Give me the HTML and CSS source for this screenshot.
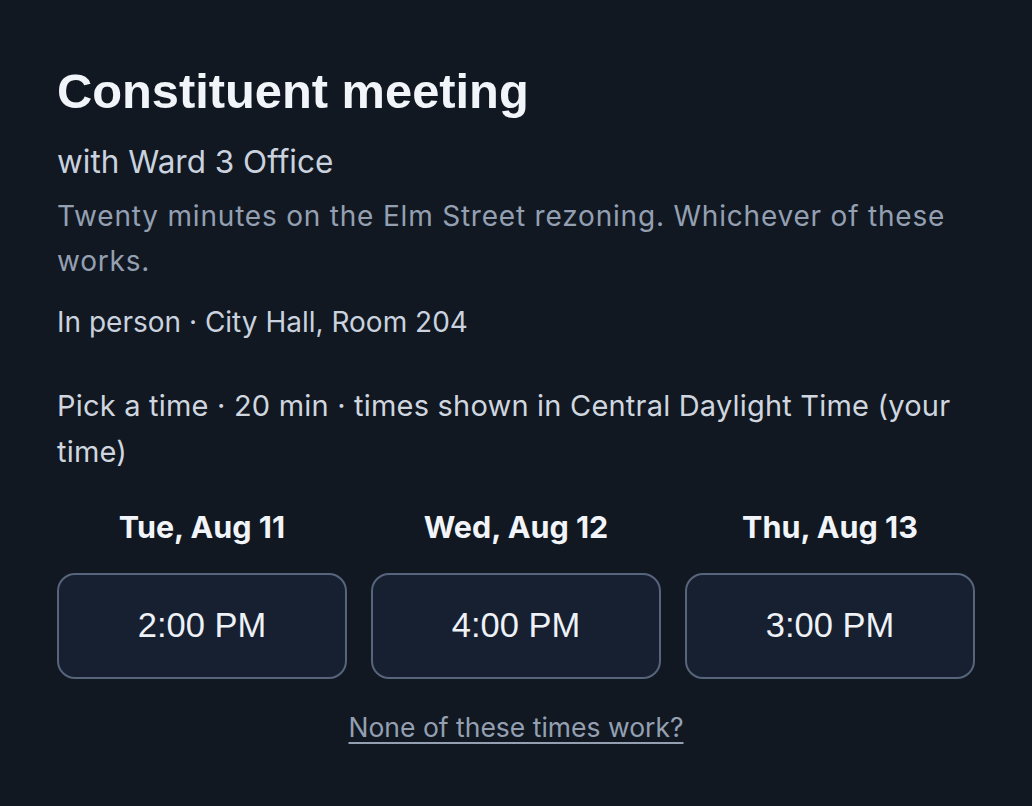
FILE: index.html
```html
<!DOCTYPE html>
<html lang="en">
<head>
<meta charset="utf-8">
<title>Constituent meeting</title>
<link rel="stylesheet" href="styles.css">
</head>
<body>
<main class="card">
  <h1 class="title">Constituent meeting</h1>
  <p class="host">with Ward 3 Office</p>
  <p class="desc">Twenty minutes on the Elm Street rezoning. Whichever of these works.</p>
  <p class="place">In person · City Hall, Room 204</p>
  <p class="pick">Pick a time · 20 min · times shown in Central Daylight Time (your time)</p>
  <div class="days">
    <div class="day">
      <div class="day-label">Tue, Aug 11</div>
      <button class="slot">2:00 PM</button>
    </div>
    <div class="day">
      <div class="day-label">Wed, Aug 12</div>
      <button class="slot">4:00 PM</button>
    </div>
    <div class="day">
      <div class="day-label">Thu, Aug 13</div>
      <button class="slot">3:00 PM</button>
    </div>
  </div>
  <div class="none-row"><a class="none" href="#">None of these times work?</a></div>
</main>
</body>
</html>
```

FILE: styles.css
```css
html, body {
  margin: 0;
  padding: 0;
  background: #111822;
}
body {
  font-family: "Inter", "Liberation Sans", sans-serif;
  width: 1032px;
  height: 806px;
  overflow: hidden;
}
.card {
  padding: 62px 57px 0 57px;
}
.title {
  margin: 0;
  font-family: "Liberation Sans", Arial, sans-serif;
  font-weight: 700;
  font-size: 48.8px;
  line-height: 58px;
  color: #f1f4f8;
}
.host {
  margin: 21.5px 0 0;
  font-size: 31.5px;
  line-height: 40px;
  color: #c9d2de;
}
.desc {
  margin: 12.8px 0 0;
  font-size: 28px;
  line-height: 45px;
  letter-spacing: 0.8px;
  color: #94a0b2;
}
.place {
  margin: 16px 0 0;
  font-size: 28px;
  line-height: 45px;
  color: #c9d2de;
}
.pick {
  margin: 38px 0 0;
  font-size: 29px;
  line-height: 46px;
  letter-spacing: 0.2px;
  color: #d0d6df;
}
.days {
  margin-top: 31.5px;
  display: grid;
  grid-template-columns: repeat(3, 290px);
  column-gap: 24px;
}
.day {
  display: flex;
  flex-direction: column;
  align-items: stretch;
}
.day-label {
  text-align: center;
  font-weight: 700;
  font-size: 30.5px;
  line-height: 40px;
  color: #f1f4f8;
}
.slot {
  margin-top: 26px;
  height: 106px;
  border: 2px solid #56647c;
  border-radius: 18px;
  background: #172030;
  color: #eef2f7;
  font-family: "Liberation Sans", Arial, sans-serif;
  font-size: 34.5px;
  font-weight: 400;
  cursor: pointer;
}
.none-row {
  margin-top: 30.4px;
  text-align: center;
  font-size: 26.5px;
  line-height: 36px;
}
.none {
  font-size: 26.5px;
  line-height: 36px;
  color: #94a0b2;
  text-decoration: underline;
  text-decoration-thickness: 2px;
  text-underline-offset: 5px;
}
```
